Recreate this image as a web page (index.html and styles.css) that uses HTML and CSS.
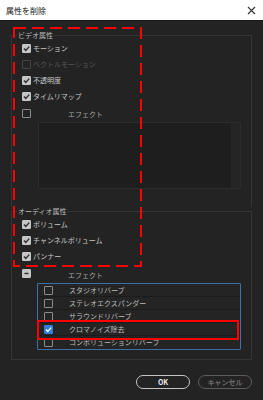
FILE: index.html
```html
<!DOCTYPE html>
<html lang="ja">
<head>
  <meta charset="UTF-8" />
  <title>属性を削除</title>
  <link rel="stylesheet" href="styles.css">
</head>
<body>
  <div class="titlebar">
    <span class="title">属性を削除</span>
    <svg class="close" width="9" height="9" viewBox="0 0 9 9"><path d="M1 1 L8 8 M8 1 L1 8" stroke="#333" stroke-width="1.1" fill="none"/></svg>
  </div>

  <fieldset class="group video">
    <legend>ビデオ属性</legend>
    <div class="opt"><span class="cb on"><svg viewBox="0 0 9 9"><path d="M2 4.6 L3.8 6.4 L7.2 2.6" /></svg></span>モーション</div>
    <div class="opt off"><span class="cb"></span>ベクトルモーション</div>
    <div class="opt"><span class="cb on"><svg viewBox="0 0 9 9"><path d="M2 4.6 L3.8 6.4 L7.2 2.6" /></svg></span>不透明度</div>
    <div class="opt"><span class="cb on"><svg viewBox="0 0 9 9"><path d="M2 4.6 L3.8 6.4 L7.2 2.6" /></svg></span>タイムリマップ</div>
    <div class="fx-head"><span class="cb"></span><span class="fx-title">エフェクト</span></div>
    <div class="fx-list empty"><div class="scroll"></div></div>
  </fieldset>

  <fieldset class="group audio">
    <legend>オーディオ属性</legend>
    <div class="opt"><span class="cb on"><svg viewBox="0 0 9 9"><path d="M2 4.6 L3.8 6.4 L7.2 2.6" /></svg></span>ボリューム</div>
    <div class="opt"><span class="cb on"><svg viewBox="0 0 9 9"><path d="M2 4.6 L3.8 6.4 L7.2 2.6" /></svg></span>チャンネルボリューム</div>
    <div class="opt"><span class="cb on"><svg viewBox="0 0 9 9"><path d="M2 4.6 L3.8 6.4 L7.2 2.6" /></svg></span>パンナー</div>
    <div class="fx-head tall"><span class="cb mixed"><svg viewBox="0 0 9 9"><path d="M2.5 4.5 L6.5 4.5" /></svg></span><span class="fx-title">エフェクト</span></div>
    <div class="fx-list focus">
      <div class="fx-row"><span class="cb"></span>スタジオリバーブ</div>
      <div class="fx-row"><span class="cb"></span>ステレオエクスパンダー</div>
      <div class="fx-row"><span class="cb"></span>サラウンドリバーブ</div>
      <div class="fx-row picked"><span class="cb blue"><svg viewBox="0 0 9 9"><path d="M2 4.6 L3.8 6.4 L7.2 2.6" /></svg></span>クロマノイズ除去</div>
      <div class="fx-row"><span class="cb"></span>コンボリューションリバーブ</div>
    </div>
  </fieldset>

  <div class="buttons">
    <button class="btn ok">OK</button>
    <button class="btn cancel">キャンセル</button>
  </div>

  <!-- annotation marks drawn over the dialog -->
  <svg class="marks" width="263" height="400" viewBox="0 0 263 400">
    <rect x="14" y="28" width="127" height="238" fill="none" stroke="#ff0000" stroke-width="2" stroke-dasharray="12 6" />
    <rect x="38" y="321" width="200" height="18" fill="none" stroke="#ff0000" stroke-width="2" />
  </svg>
</body>
</html>
```

FILE: styles.css
```css
html, body {
  margin: 0;
  padding: 0;
}
body {
  position: relative;
  width: 263px;
  height: 400px;
  overflow: hidden;
  background: #232323;
  color: #c2c2c2;
  font-family: "Noto Sans CJK JP", "Noto Sans", sans-serif;
  font-size: 7px;
  line-height: 9px;
}
.titlebar {
  height: 21px;
  background: #ffffff;
  border-bottom: 1px solid #1a1a1a;
  box-sizing: border-box;
  display: flex;
  align-items: center;
  justify-content: space-between;
  padding: 0 7px 0 6px;
}
.title {
  color: #111;
  font-size: 8px;
}
.close {
  display: block;
}
.group {
  margin: 0 11px;
  padding: 0;
  border: 1px solid #353535;
  min-width: 0;
}
.group legend {
  margin-left: 5px;
  padding: 0 1px;
  font-size: 7px;
  line-height: 9px;
  color: #bdbdbd;
}
.video {
  margin-top: 10px;
  border-bottom: none;
  padding-bottom: 18px;
}
.audio {
  margin-top: 0;
  padding-bottom: 9px;
}
.opt {
  height: 16px;
  display: flex;
  align-items: center;
  padding-left: 10px;
  color: #c8c8c8;
}
.opt.off {
  color: #575757;
}
.cb {
  width: 9px;
  height: 9px;
  box-sizing: border-box;
  border: 1px solid #8c8c8c;
  border-radius: 1px;
  margin-right: 2px;
  flex: none;
}
.opt.off .cb {
  border-color: #454545;
}
.cb svg {
  display: block;
  width: 9px;
  height: 9px;
  margin: -1px;
}
.cb path {
  fill: none;
  stroke: #2b2b2b;
  stroke-width: 1.4;
}
.cb.on, .cb.mixed {
  background: #c6c6c6;
  border-color: #c6c6c6;
}
.cb.blue {
  background: #2f7fd6;
  border-color: #2f7fd6;
}
.cb.blue path {
  stroke: #ffffff;
}
.fx-head {
  height: 18px;
  display: flex;
  align-items: center;
  padding-left: 10px;
}
.fx-head.tall {
  height: 19px;
}
.fx-head .cb {
  margin-right: 37px;
}
.fx-title {
  color: #a8a8a8;
  padding-top: 3px;
}
.fx-list {
  margin: 0 10px 0 26px;
  background: #1e1e1e;
  border: 1px solid #2c2c2c;
  border-radius: 1px;
}
.fx-list.empty {
  height: 65px;
  display: flex;
  justify-content: flex-end;
}
.fx-list .scroll {
  width: 9px;
  background: #252525;
}
.fx-list.focus {
  margin-left: 25px;
  border-color: #3a6fa8;
  background: #222222;
}
.fx-row {
  height: 13px;
  box-sizing: border-box;
  display: flex;
  align-items: center;
  padding-left: 6px;
  border-bottom: 1px solid #1c1c1c;
  background: #242424;
  color: #bdbdbd;
}
.fx-row:last-child {
  border-bottom: none;
}
.fx-row .cb {
  margin-right: 16px;
}
.buttons {
  display: flex;
  justify-content: flex-end;
  gap: 8px;
  padding: 15px 11px 0 0;
}
.btn {
  width: 54px;
  height: 14px;
  padding: 0;
  border-radius: 7px;
  background: #232323;
  font-family: "Noto Sans CJK JP", "Noto Sans", sans-serif;
  font-size: 7px;
  font-weight: bold;
  line-height: 10px;
}
.btn.ok {
  border: 1.5px solid #c4c4c4;
  color: #e8e8e8;
}
.btn.cancel {
  border: 1.5px solid #5c5c5c;
  color: #6a6a6a;
}
.marks {
  position: absolute;
  left: 0;
  top: 0;
  pointer-events: none;
}
```
